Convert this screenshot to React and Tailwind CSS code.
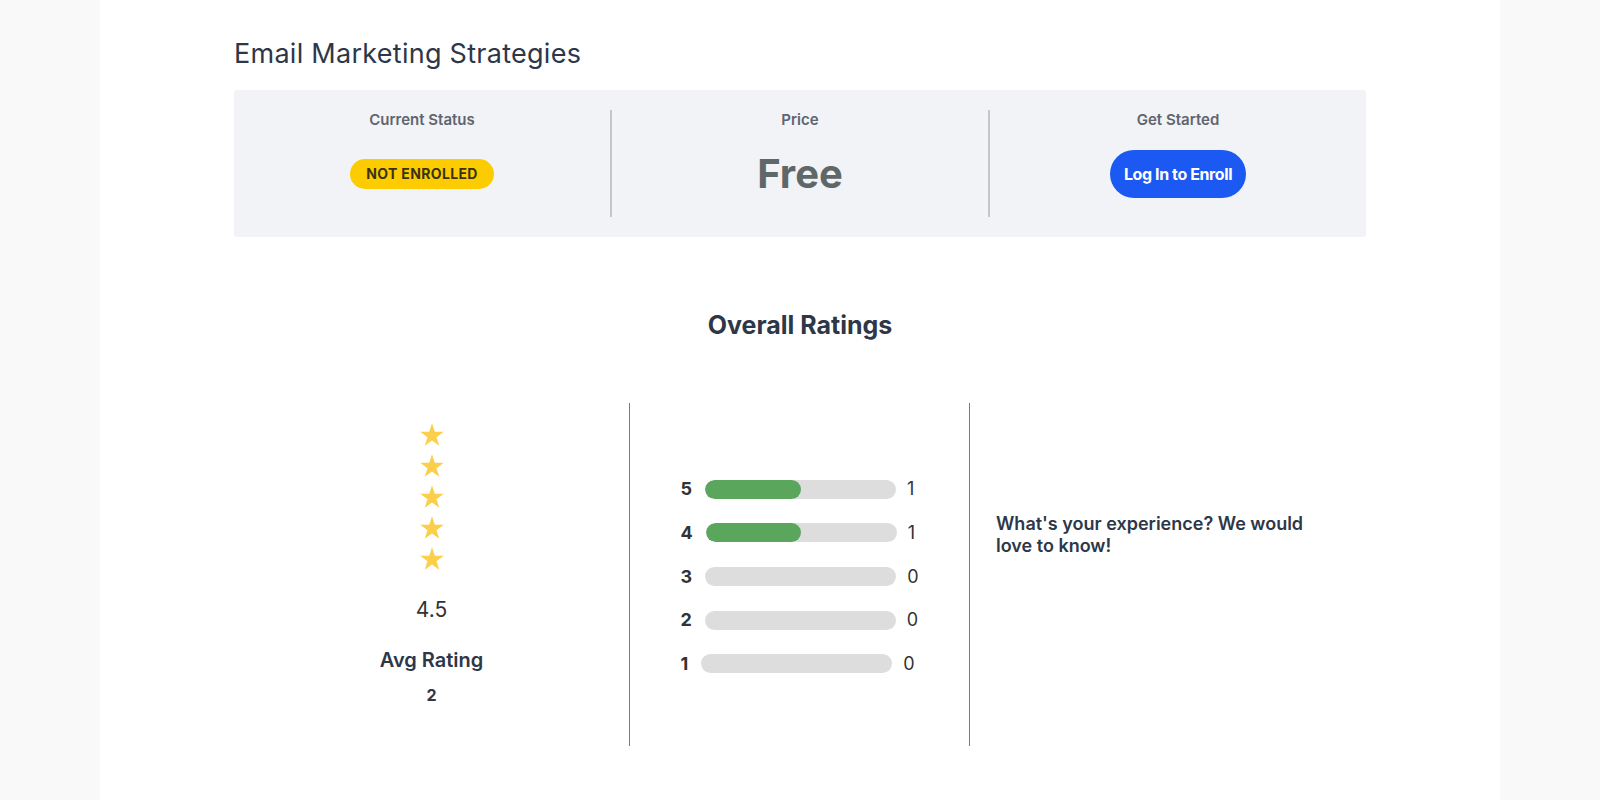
import React from "react";

const ratings = [
  { stars: 5, count: 1 },
  { stars: 4, count: 1 },
  { stars: 3, count: 0 },
  { stars: 2, count: 0 },
  { stars: 1, count: 0 },
];

const total = 2;

const Star = () => (
  <svg width="24" height="23" viewBox="0 0 24 23.4" className="block">
    <polygon
      fill="#fbcf4a"
      points="12,0.3 14.83,9.01 23.98,9.01 16.57,14.39 19.41,23.09 12,17.71 4.59,23.09 7.43,14.39 0.02,9.01 9.17,9.01"
    />
  </svg>
);

const App = () => {
  return (
    <div className="min-h-screen bg-[#f9f9f9] font-['Inter','Liberation_Sans',sans-serif]">
      <div className="mx-auto w-[1400px] min-h-screen bg-white">
        <div className="mx-auto w-[1132px] pt-[38px]">
          {/* Course title */}
          <h1 className="text-[27px] leading-[32px] font-normal tracking-[0.01em] text-[#2d3748]">
            Email Marketing Strategies
          </h1>

          {/* Enrollment box */}
          <div className="mt-5 flex rounded-[3px] bg-[#f1f3f6] py-5">
            <div className="flex h-[107px] flex-1 flex-col items-center border-r-2 border-[#c3c6cb]">
              <p className="text-[15px] leading-5 font-semibold text-[#5f6570]">Current Status</p>
              <div className="flex flex-1 items-center">
                <span className="rounded-full bg-[#fdcc00] px-4 py-[5px] text-sm font-bold leading-5 tracking-wide text-[#3a3212]">
                  NOT ENROLLED
                </span>
              </div>
            </div>
            <div className="flex h-[107px] flex-1 flex-col items-center border-r-2 border-[#c3c6cb]">
              <p className="text-[15px] leading-5 font-semibold text-[#5f6570]">Price</p>
              <div className="flex flex-1 items-center">
                <span className="text-[40px] leading-10 font-bold text-[#5f6769]">Free</span>
              </div>
            </div>
            <div className="flex h-[107px] flex-1 flex-col items-center">
              <p className="text-[15px] leading-5 font-semibold text-[#5f6570]">Get Started</p>
              <div className="flex flex-1 items-center">
                <button className="h-12 rounded-full bg-[#1b59f2] px-[14px] text-base font-bold tracking-tight text-white">
                  Log In to Enroll
                </button>
              </div>
            </div>
          </div>

          {/* Ratings */}
          <h2 className="mt-[72px] text-center text-[25px] font-bold leading-8 text-[#2d3748]">
            Overall Ratings
          </h2>

          <div className="mt-[62px] flex h-[343px]">
            <div className="flex w-[396px] flex-col items-center border-r border-[#7a7a7a] pt-5">
              <div className="flex flex-col gap-2">
                <Star />
                <Star />
                <Star />
                <Star />
                <Star />
              </div>
              <p className="mt-[26px] text-[21px] leading-7 text-[#333]">4.5</p>
              <p className="mt-[22px] text-xl font-semibold leading-7 text-[#2d3748]">Avg Rating</p>
              <p className="mt-[9px] text-base font-bold text-[#2d3748]">{total}</p>
            </div>

            <div className="flex w-[340px] items-center justify-center border-r border-[#7a7a7a] pt-1">
              <div className="flex flex-col gap-[15.7px]">
                {ratings.map((r) => (
                  <div key={r.stars} className="flex h-7 items-center">
                    <span className="text-lg font-bold text-[#333]">{r.stars}</span>
                    <div className="ml-[13px] h-[19px] w-[191px] overflow-hidden rounded-full bg-[#dddddd]">
                      <div
                        className="h-full rounded-full bg-[#5aa65c]"
                        style={{ width: `${(r.count / total) * 100}%` }}
                      />
                    </div>
                    <span className="ml-[11px] text-lg text-[#333]">{r.count}</span>
                  </div>
                ))}
              </div>
            </div>

            <div className="flex-1 pl-[26px] pt-[110px]">
              <p className="w-[320px] text-lg font-semibold leading-[22px] text-[#2d3748]">
                What's your experience? We would love to know!
              </p>
            </div>
          </div>
        </div>
      </div>
    </div>
  );
};

export default App;
